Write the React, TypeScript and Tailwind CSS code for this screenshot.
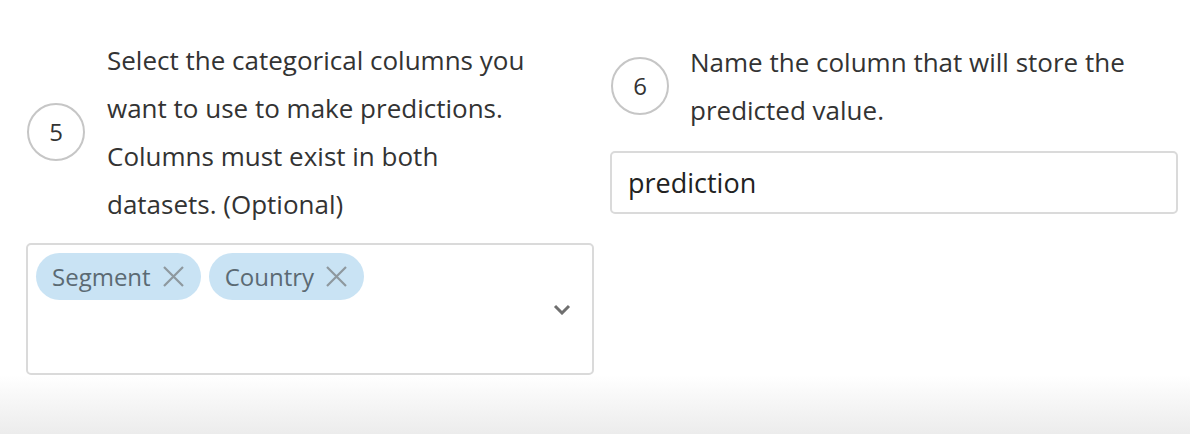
function Step({ n }: { n: number }) {
  return (
    <div className="w-[58px] h-[58px] shrink-0 rounded-full border-2 border-[#c6c6c6] flex items-center justify-center text-[24px] font-medium text-[#333]">
      {n}
    </div>
  );
}

function Chip({ label }: { label: string }) {
  return (
    <div className="h-[47px] flex items-center gap-[11px] pl-4 pr-4 rounded-full bg-[#c9e3f4] text-[#5b6a73] text-[24px] font-medium">
      <span>{label}</span>
      <svg width="23" height="23" viewBox="0 0 23 23" fill="none" stroke="#8e989e" strokeWidth="2.2">
        <path d="M2 2L21 21M21 2L2 21" />
      </svg>
    </div>
  );
}

export default function App() {
  return (
    <div className="h-[434px] w-[1190px] flex flex-col bg-white font-['Open_Sans',sans-serif] text-[#333]">
      <div className="flex-1 flex gap-4 pl-[26px]">
        {/* step 5: categorical columns */}
        <div className="w-[568px] flex flex-col pt-[36px]">
          <div className="flex items-center gap-[22px] pl-px">
            <Step n={5} />
            <p className="w-[430px] text-[26px] leading-[48px]">
              Select the categorical columns you want to use to make predictions. Columns must exist in both
              datasets. (Optional)
            </p>
          </div>
          <div className="mt-[15px] h-[132px] border-2 border-[#dadada] rounded-[5px] flex items-start">
            <div className="flex-1 flex flex-wrap gap-2 pt-2 pl-2">
              <Chip label="Segment" />
              <Chip label="Country" />
            </div>
            <svg className="self-center mr-[21px]" width="18" height="11" viewBox="0 0 18 11" fill="none" stroke="#6f6f6f" strokeWidth="3">
              <path d="M2 2L9 9L16 2" />
            </svg>
          </div>
        </div>

        {/* step 6: output column name */}
        <div className="w-[568px] flex flex-col pt-[38px]">
          <div className="flex items-center gap-[21px] pl-px">
            <Step n={6} />
            <p className="flex-1 text-[26px] leading-[48px]">Name the column that will store the predicted value.</p>
          </div>
          <input
            readOnly
            value="prediction"
            className="mt-[17px] h-[63px] w-full border-2 border-[#dadada] rounded-[5px] px-4 text-[27px] text-[#222] outline-none"
          />
        </div>
      </div>
      <div className="h-[59px] bg-gradient-to-b from-white to-[#ececec]" />
    </div>
  );
}
